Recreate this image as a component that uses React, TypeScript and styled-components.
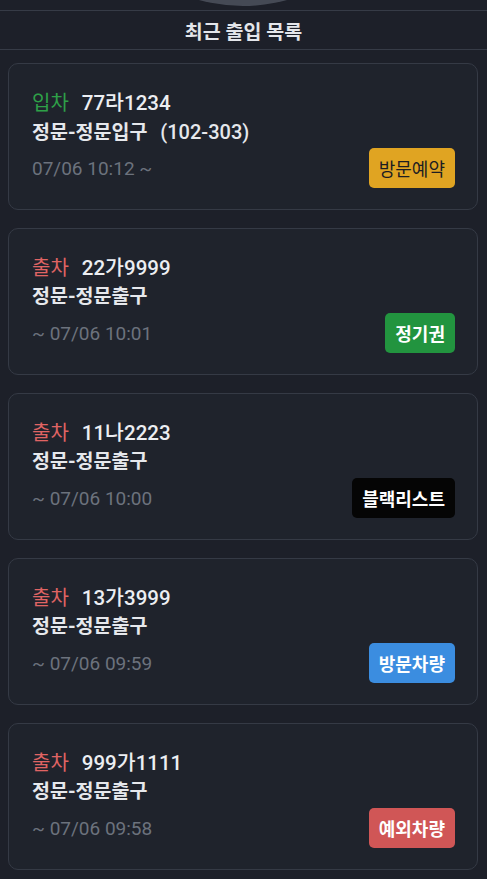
import styled, { createGlobalStyle } from "styled-components";

const GlobalStyle = createGlobalStyle`
    html, body {
        margin: 0;
        padding: 0;
        background: #1d2029;
    }
    body {
        font-family: Roboto, "Noto Sans CJK KR", sans-serif;
        color: #e8eaee;
    }
`;

const Page = styled.div`
    width: 487px;
    min-height: 879px;
    background: #1d2029;
    overflow: hidden;
`;

const TopStrip = styled.div`
    height: 10px;
    overflow: hidden;
    display: flex;
    justify-content: center;
`;

const Knob = styled.div`
    flex: none;
    width: 330px;
    height: 330px;
    margin-top: -324px;
    margin-left: -2px;
    border-radius: 50%;
    background: #454a55;
`;

const Header = styled.div`
    height: 38px;
    border-top: 1px solid #363b46;
    border-bottom: 1px solid #363b46;
    display: flex;
    align-items: center;
    justify-content: center;
    font-size: 19.5px;
    font-weight: 700;
    color: #e4e6ea;
`;

const List = styled.div`
    display: flex;
    flex-direction: column;
    gap: 18px;
    padding: 13px 9px 0 8px;
`;

const Card = styled.div`
    height: 147px;
    box-sizing: border-box;
    border: 1px solid #353a45;
    border-radius: 10px;
    background: #1f232c;
    padding: 24px 22px 0 23px;
`;

const TitleRow = styled.div`
    display: flex;
    align-items: baseline;
    gap: 13px;
    height: 30px;
    line-height: 30px;
    font-size: 20px;
`;

const Direction = styled.span<{ $in: boolean }>`
    color: ${({ $in }) => ($in ? "#2ea048" : "#e06464")};
`;

const Plate = styled.span`
    color: #eceef2;
    font-size: 20.5px;
    font-weight: 500;
`;

const Gate = styled.div`
    height: 28px;
    line-height: 28px;
    font-size: 19.5px;
    font-weight: 700;
    color: #e6e8ec;
`;

const Unit = styled.span`
    margin-left: 13px;
    font-size: 20px;
    font-weight: 500;
`;

const BottomRow = styled.div`
    margin-top: 2px;
    display: flex;
    align-items: center;
    justify-content: space-between;
`;

const Time = styled.span`
    font-size: 19px;
    color: #6c727d;
    white-space: pre;
`;

const Badge = styled.span<{ $bg: string; $fg: string; $bold: boolean }>`
    height: 40px;
    box-sizing: border-box;
    padding: 0 10px;
    display: inline-flex;
    align-items: center;
    border-radius: 5px;
    font-size: 18px;
    font-weight: ${({ $bold }) => ($bold ? 700 : 400)};
    background: ${({ $bg }) => $bg};
    color: ${({ $fg }) => $fg};
`;

type Entry = {
    inbound: boolean;
    plate: string;
    gate: string;
    unit?: string;
    time: string;
    badge: string;
    bg: string;
    fg: string;
    bold: boolean;
};

const entries: Entry[] = [
    { inbound: true, plate: "77라1234", gate: "정문-정문입구", unit: "(102-303)", time: "07/06 10:12 ~", badge: "방문예약", bg: "#e0a422", fg: "#1c1d22", bold: false },
    { inbound: false, plate: "22가9999", gate: "정문-정문출구", time: "~ 07/06 10:01", badge: "정기권", bg: "#22943f", fg: "#ffffff", bold: true },
    { inbound: false, plate: "11나2223", gate: "정문-정문출구", time: "~ 07/06 10:00", badge: "블랙리스트", bg: "#050505", fg: "#ffffff", bold: true },
    { inbound: false, plate: "13가3999", gate: "정문-정문출구", time: "~ 07/06 09:59", badge: "방문차량", bg: "#3b8de0", fg: "#ffffff", bold: true },
    { inbound: false, plate: "999가1111", gate: "정문-정문출구", time: "~ 07/06 09:58", badge: "예외차량", bg: "#d05656", fg: "#ffffff", bold: true },
];

export default function App() {
    return (
        <>
            <GlobalStyle />
            <Page>
                <TopStrip>
                    <Knob />
                </TopStrip>
                <Header>최근 출입 목록</Header>
                <List>
                    {entries.map((e, i) => (
                        <Card key={e.plate + "-" + i}>
                            <TitleRow>
                                <Direction $in={e.inbound}>{e.inbound ? "입차" : "출차"}</Direction>
                                <Plate>{e.plate}</Plate>
                            </TitleRow>
                            <Gate>
                                {e.gate}
                                {e.unit && <Unit>{e.unit}</Unit>}
                            </Gate>
                            <BottomRow>
                                <Time>{e.time}</Time>
                                <Badge $bg={e.bg} $fg={e.fg} $bold={e.bold}>{e.badge}</Badge>
                            </BottomRow>
                        </Card>
                    ))}
                </List>
            </Page>
        </>
    );
}
